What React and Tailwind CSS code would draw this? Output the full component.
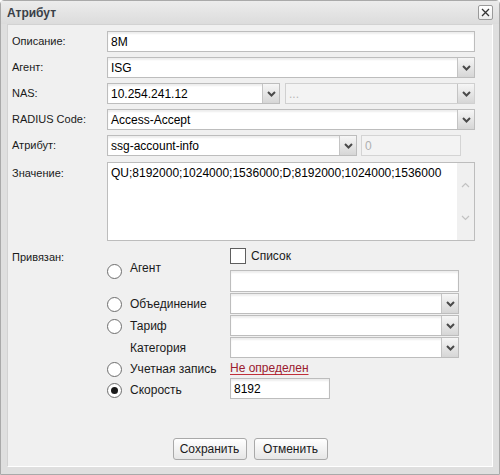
const font = { fontFamily: '"Liberation Sans", Arial, sans-serif' };

function Chevron({ color = "#4a4a4a", thin = false, up = false }) {
  return (
    <svg width="9" height="6" viewBox="0 0 9 6">
      <path
        d={up ? "M1 5 L4.5 1.5 L8 5" : "M1 1 L4.5 4.5 L8 1"}
        fill="none"
        stroke={color}
        strokeWidth={thin ? 1.2 : 2}
      />
    </svg>
  );
}

function TextInput({ value, className = "", disabled = false }) {
  return (
    <div
      className={`h-[21px] flex items-center px-[3px] border text-[12px] ${
        disabled
          ? "border-[#d4d4d4] bg-[#f3f3f3] text-[#b0b0b0]"
          : "border-[#bdbdbd] bg-white text-black shadow-[inset_0_2px_2px_rgba(0,0,0,0.07)]"
      } ${className}`}
    >
      {value}
    </div>
  );
}

function Select({ value, className = "", disabled = false }) {
  return (
    <div
      className={`h-[21px] flex border ${
        disabled ? "border-[#d0d0d0] bg-[#f3f3f3]" : "border-[#bdbdbd] bg-white shadow-[inset_0_2px_2px_rgba(0,0,0,0.07)]"
      } ${className}`}
    >
      <div
        className={`flex-1 flex items-center px-[3px] text-[12px] ${
          disabled ? "text-[#b8b8b8]" : "text-black"
        }`}
      >
        {value}
      </div>
      <div className="w-[17px] flex items-center justify-center border-l border-[#c4c4c4] bg-gradient-to-b from-[#f6f6f6] to-[#d6d6d6]">
        <Chevron />
      </div>
    </div>
  );
}

function Radio({ checked = false }) {
  return (
    <div className="w-[15px] h-[15px] rounded-full border border-[#6e6e6e] bg-white flex items-center justify-center shrink-0">
      {checked && <div className="w-[7px] h-[7px] rounded-full bg-[#1a1a1a]" />}
    </div>
  );
}

function Row({ label, children }) {
  return (
    <div className="flex items-center h-[21px]">
      <div className="w-[95px] text-[11px] text-[#1a1a1a]">{label}</div>
      <div className="flex-1 flex items-center">{children}</div>
    </div>
  );
}

function Button({ children }) {
  return (
    <button className="w-[74px] h-[22px] rounded-[3px] border border-[#a9a9a9] bg-gradient-to-b from-white to-[#e6e6e6] text-[12px] text-[#1a1a1a]">
      {children}
    </button>
  );
}

export default function App() {
  return (
    <div
      style={font}
      className="w-[500px] h-[475px] bg-[#dfdfdf] border border-[#a9a9a9] rounded-t-[4px] flex flex-col"
    >
      <div className="h-[23px] flex items-center justify-between pl-[6px] pr-[6px] bg-gradient-to-b from-[#ececec] to-[#dcdcdc]">
        <span className="text-[12px] font-bold text-[#3a3f48]">Атрибут</span>
        <div className="w-[15px] h-[15px] border border-[#9a9a9a] rounded-[2px] bg-gradient-to-b from-white to-[#ececec] flex items-center justify-center">
          <svg width="9" height="9" viewBox="0 0 9 9">
            <path d="M1 1 L8 8 M8 1 L1 8" stroke="#333" strokeWidth="1.3" />
          </svg>
        </div>
      </div>

      <div className="flex-1 mx-[6px] mb-[7px] border border-[#d2d2d2] border-b-white border-r-white bg-[#f0f0f0] flex flex-col pl-[4px] pr-[17px] pt-[6px]">
        <div className="flex flex-col gap-[5px]">
          <Row label="Описание:">
            <TextInput value="8M" className="flex-1" />
          </Row>
          <Row label="Агент:">
            <Select value="ISG" className="flex-1" />
          </Row>
          <Row label="NAS:">
            <Select value="10.254.241.12" className="w-[173px]" />
            <Select value="..." disabled className="flex-1 ml-[5px]" />
          </Row>
          <Row label="RADIUS Code:">
            <Select value="Access-Accept" className="flex-1" />
          </Row>
          <Row label="Атрибут:">
            <Select value="ssg-account-info" className="w-[250px]" />
            <TextInput value="0" disabled className="w-[100px] ml-[4px]" />
          </Row>
        </div>

        <div className="flex mt-[6px]">
          <div className="w-[95px] text-[11px] text-[#1a1a1a] pt-[3px]">Значение:</div>
          <div className="flex-1 h-[79px] border border-[#bdbdbd] bg-white flex">
            <div className="flex-1 text-[12px] text-black px-[3px] pt-[2px] leading-[16px]">
              QU;8192000;1024000;1536000;D;8192000;1024000;1536000
            </div>
            <div className="w-[17px] bg-[#f0f0f0] flex flex-col items-center justify-between pt-[19px] pb-[19px]">
              <Chevron color="#c2c2c2" thin up />
              <Chevron color="#c2c2c2" thin />
            </div>
          </div>
        </div>

        <div className="flex mt-[7px]">
          <div className="w-[95px] text-[11px] text-[#1a1a1a] pt-[1px]">Привязан:</div>

          <div className="w-[123px] flex flex-col pt-[12px] text-[12px] text-[#1a1a1a]">
            <div className="h-[22px] flex items-center gap-[8px]">
              <Radio />
              <span className="-mt-[6px]">Агент</span>
            </div>
            <div className="h-[22px] flex items-center gap-[8px] mt-[11px]">
              <Radio />
              <span>Объединение</span>
            </div>
            <div className="h-[22px] flex items-center gap-[8px]">
              <Radio />
              <span>Тариф</span>
            </div>
            <div className="h-[21px] flex items-center pl-[23px]">Категория</div>
            <div className="h-[22px] flex items-center gap-[8px]">
              <Radio />
              <span>Учетная запись</span>
            </div>
            <div className="h-[20px] flex items-center gap-[8px]">
              <Radio checked />
              <span>Скорость</span>
            </div>
          </div>

          <div className="w-[229px] flex flex-col">
            <div className="h-[16px] flex items-center gap-[5px] text-[12px] text-[#1a1a1a]">
              <div className="w-[16px] h-[16px] border border-[#5e5e5e] bg-white" />
              <span>Список</span>
            </div>
            <TextInput value="" className="mt-[6px] h-[22px]" />
            <div className="flex flex-col gap-[1px] mt-[1px]">
              <Select value="" />
              <Select value="" />
              <Select value="" />
            </div>
            <div className="h-[20px] flex items-center">
              <span className="text-[12px] text-[#9b1b2f] underline decoration-[#c0303a] underline-offset-2">
                Не определен
              </span>
            </div>
            <TextInput value="8192" className="w-[100px]" />
          </div>
        </div>

        <div className="mt-auto mb-[6px] flex justify-center gap-[7px] pl-[13px]">
          <Button>Сохранить</Button>
          <Button>Отменить</Button>
        </div>
      </div>
    </div>
  );
}
